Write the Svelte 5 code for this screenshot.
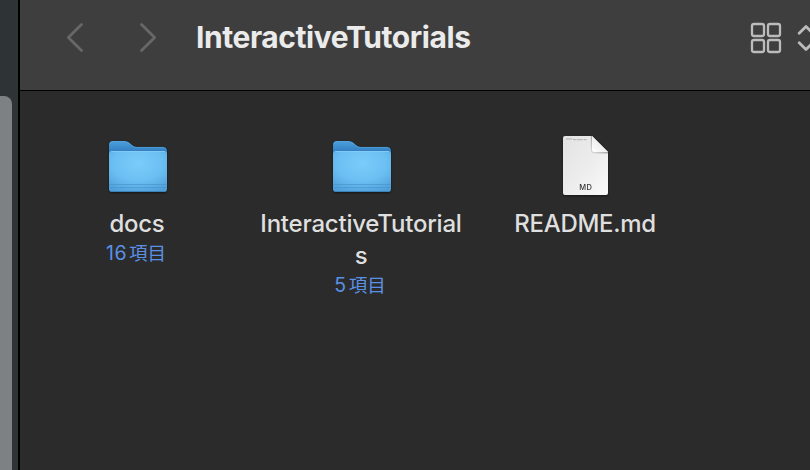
<script>
  const items = [
    { kind: 'folder', lines: ['docs'], count: '16', spacing: -0.3 },
    { kind: 'folder', lines: ['InteractiveTutorial', 's'], count: '5', spacing: -0.22 },
    { kind: 'file', lines: ['README.md'], count: null, spacing: -0.3 }
  ];
</script>

<div class="screen">
  <aside><div class="thumb"></div></aside>
  <section class="window">
    <header>
      <div class="nav">
        <svg width="19" height="30" viewBox="0 0 19 30"><path d="M15.5 1.5 L2.4 14.5 L15.5 27.5" /></svg>
        <svg width="19" height="30" viewBox="0 0 19 30"><path d="M2.5 1.5 L15.6 14.5 L2.5 27.5" /></svg>
      </div>
      <h1>InteractiveTutorials</h1>
      <svg class="view" width="60" height="32" viewBox="0 0 60 32">
        <rect x="2" y="2" width="12" height="12" rx="2" />
        <rect x="18" y="2" width="12" height="12" rx="2" />
        <rect x="2" y="18" width="12" height="12" rx="2" />
        <rect x="18" y="18" width="12" height="12" rx="2" />
        <path d="M49.2 11.3 L56 4.6 L62.8 11.3 M49.2 20.7 L56 27.4 L62.8 20.7" />
      </svg>
    </header>
    <main>
      {#each items as item, i}
        <div class="item">
          {#if item.kind === 'folder'}
            <svg class="icon" width="64" height="64" viewBox="-1 0 64 64">
              <defs>
                <linearGradient id="back{i}" x1="0" y1="0" x2="0" y2="1">
                  <stop offset="0" stop-color="#4ba0dc" />
                  <stop offset=".2" stop-color="#3580c2" />
                </linearGradient>
                <radialGradient id="front{i}" cx=".5" cy=".3" r=".78">
                  <stop offset="0" stop-color="#7accfb" />
                  <stop offset=".55" stop-color="#6cbff2" />
                  <stop offset="1" stop-color="#4f9fd9" />
                </radialGradient>
              </defs>
              <path d="M3 12 Q3 8 7 8 H18 Q21 8 23 9.6 L26.5 12.5 Q28.5 14 31 14 H57 Q61 14 61 18 V54 Q61 58 57 58 H7 Q3 58 3 54Z" fill="url(#back{i})" />
              <path d="M4 11 Q5 8.5 8 8.5 H18 Q21 8.5 23 10.2 L26 12.8 Q28 14.4 31 14.4 H58" fill="none" stroke="#5aa9e2" stroke-width=".5" />
              <rect x="3" y="18" width="58" height="41" rx="3" fill="url(#front{i})" />
              <path d="M5 18.5 H59" stroke="#86d0fb" stroke-width="1" opacity=".7" />
              <path d="M3.5 51.5 H60.5 M3.5 54.5 H60.5" stroke="#4796cd" stroke-width=".9" opacity=".75" />
              <path d="M5 58.5 H59" stroke="#3c83b8" stroke-width="1" />
            </svg>
          {:else}
            <svg class="icon" width="64" height="64" viewBox="0 0 64 64">
              <defs>
                <linearGradient id="sheet" x1="0" y1="0" x2="1" y2="1">
                  <stop offset="0" stop-color="#e3e3e3" />
                  <stop offset=".5" stop-color="#ececec" />
                  <stop offset="1" stop-color="#fafafa" />
                </linearGradient>
                <linearGradient id="fold" x1="0" y1="1" x2=".6" y2=".4">
                  <stop offset="0" stop-color="#ffffff" />
                  <stop offset="1" stop-color="#ececec" />
                </linearGradient>
                <linearGradient id="shade" x1="1" y1="0" x2="0" y2="1">
                  <stop offset=".5" stop-color="#a8a8a8" />
                  <stop offset="1" stop-color="#c5c5c5" stop-opacity=".4" />
                </linearGradient>
              </defs>
              <path d="M10 5 Q10 3 12 3 H39 L55 19 V60 Q55 62 53 62 H12 Q10 62 10 60Z" fill="url(#sheet)" />
              <path d="M37.8 3 H39 L55 19 V20.5 H42 Q37.5 20.5 37.8 16Z" fill="url(#shade)" />
              <path d="M39 3 V17 Q39 19 41 19 H55Z" fill="url(#fold)" />
              <path d="M13 6 H19 L21 6.7 H34" fill="none" stroke="#aaa" stroke-width=".9" stroke-dasharray="6 1 3 .7" />
              <text x="32.7" y="56.7" text-anchor="middle">MD</text>
            </svg>
          {/if}
          <div class="name" style="letter-spacing: {item.spacing}px">
            {#each item.lines as line}<span>{line}</span>{/each}
          </div>
          {#if item.count}
            <div class="count"><span>{item.count}</span><span class="cjk">項目</span></div>
          {/if}
        </div>
      {/each}
    </main>
  </section>
</div>

<style>
  :global(body) { margin: 0; background: #2b2b2b; }
  .screen {
    display: flex;
    width: 810px;
    height: 470px;
    overflow: hidden;
    font-family: Inter, "Noto Sans CJK JP", sans-serif;
  }
  aside {
    flex: none;
    box-sizing: border-box;
    width: 20px;
    padding-top: 96px;
    background: #2e3336;
    border-right: 2px solid #000;
  }
  .thumb { width: 12px; height: 374px; background: #7d8183; border-radius: 0 8px 0 0; }
  .window { flex: 1; min-width: 0; background: #2b2b2b; }
  header {
    display: flex;
    box-sizing: border-box;
    height: 91px;
    padding: 0 0 14px 46px;
    align-items: center;
    background: #3e3e3e;
    border-bottom: 1px solid #000;
  }
  .nav { display: flex; gap: 54px; width: 130px; flex: none; }
  .nav path { fill: none; stroke: #676767; stroke-width: 2.8; stroke-linecap: round; stroke-linejoin: round; }
  h1 {
    flex: 1;
    margin: -3px 0 0;
    color: #ebebeb;
    font-size: 30px;
    font-weight: 700;
    line-height: 36px;
    letter-spacing: -0.43px;
    white-space: nowrap;
  }
  .view { flex: none; }
  .view rect, .view path { fill: none; stroke: #bcbcbc; stroke-width: 2.3; }
  .view path { stroke-width: 2.8; stroke-linecap: round; stroke-linejoin: round; }
  main { display: flex; padding: 42px 0 0 5px; }
  .item { width: 224px; flex: none; display: flex; flex-direction: column; align-items: center; }
  .icon { filter: drop-shadow(0 1px 1px rgba(0, 0, 0, .5)); }
  .icon text { font-size: 7.5px; fill: #333; font-weight: 500; letter-spacing: .2px; }
  .name { margin-top: 11px; color: #dfdfdf; font-size: 24px; line-height: 32px; font-weight: 500; }
  .name span { display: block; text-align: center; white-space: nowrap; }
  .count {
    display: flex;
    gap: 2px;
    align-items: center;
    padding-right: 2px;
    color: #5a91e6;
    font-size: 19.5px;
    line-height: 26px;
    letter-spacing: .6px;
  }
  .cjk { font-family: "Noto Sans CJK JP", sans-serif; font-size: 18.5px; letter-spacing: 0; margin-top: -3px; }
</style>
